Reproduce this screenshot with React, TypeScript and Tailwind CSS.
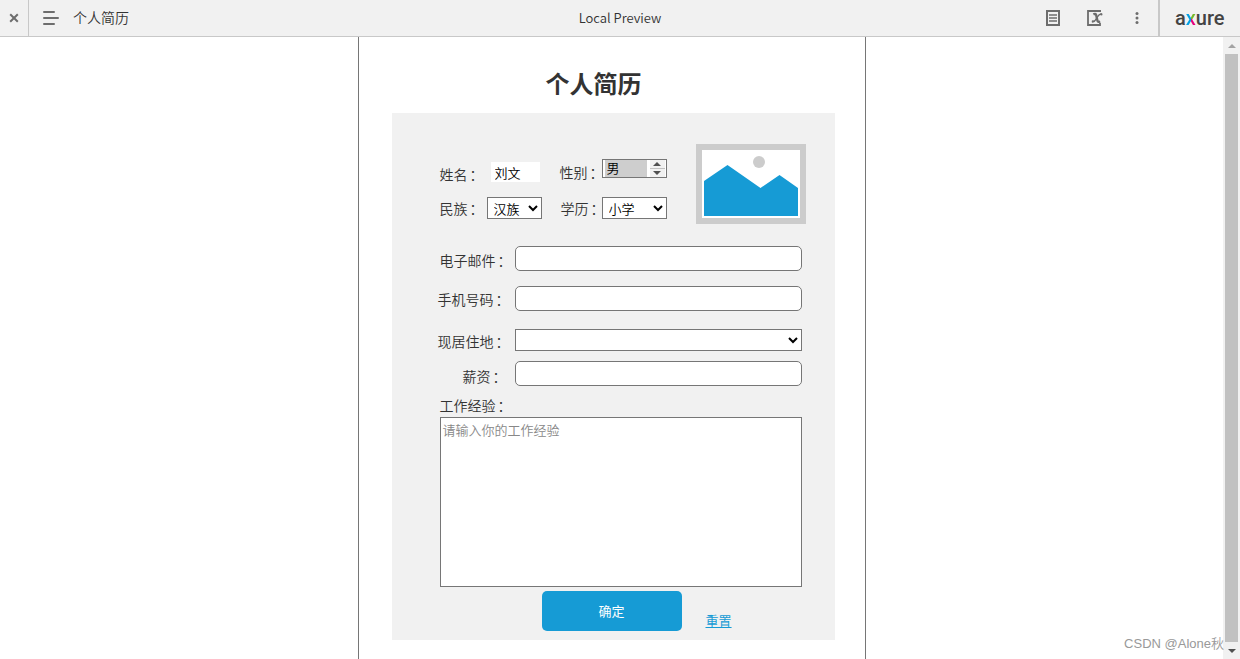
import React, { useState } from "react";

const inputClass =
  "h-[25px] w-full rounded-[5px] border border-[#767676] bg-white px-2 text-[13px] outline-none";

const selectClass =
  "h-[22px] border border-[#767676] bg-white pl-0.5 text-[13px] text-black outline-none";

const Label = ({
  htmlFor,
  className = "",
  children,
}: {
  htmlFor: string;
  className?: string;
  children: React.ReactNode;
}) => (
  <label
    htmlFor={htmlFor}
    className={`shrink-0 whitespace-nowrap text-[14px] leading-5 text-[#333] ${className}`}
  >
    {children}
    <span className="pl-0.5">：</span>
  </label>
);

const Header = () => (
  <header className="flex h-[37px] shrink-0 items-center justify-between border-b border-[#c8c8c8] bg-[#f1f1f1]">
    {/* LEFT */}
    <div className="flex h-full flex-1 items-center">
      <button
        type="button"
        aria-label="Close"
        className="flex h-full w-[29px] items-center justify-center border-r border-[#c8c8c8]"
      >
        <svg width="10" height="10" viewBox="0 0 10 10" stroke="#6d6d6d" strokeWidth="2">
          <path d="M1.2 1.2 8.8 8.8M8.8 1.2 1.2 8.8" />
        </svg>
      </button>
      <button type="button" aria-label="Pages" className="ml-3.5">
        <svg
          width="16"
          height="14"
          viewBox="0 0 16 14"
          stroke="#6d6d6d"
          strokeWidth="2"
          strokeLinecap="round"
        >
          <path d="M1 1H11M1 7H15M1 13H11" />
        </svg>
      </button>
      <span className="ml-3.5 pb-0.5 text-[14px] leading-5">个人简历</span>
    </div>

    <span className="text-[13px] leading-5">Local Preview</span>

    {/* RIGHT */}
    <div className="flex h-full flex-1 items-center justify-end">
      <button type="button" aria-label="Notes">
        <svg width="14" height="16" viewBox="0 0 14 16" fill="none" stroke="#6d6d6d">
          <rect x="1" y="1" width="12" height="14" strokeWidth="2" />
          <path d="M3 5H11M3 8H11M3 11H11" strokeWidth="1.6" />
        </svg>
      </button>
      <button type="button" aria-label="Variables" className="ml-[27px]">
        <svg width="16" height="16" viewBox="0 0 16 16" fill="none" stroke="#6d6d6d">
          <path d="M14 1H1V15H13V13" strokeWidth="1.8" />
          <path
            d="M6.4 4.4C8.4 3.2 9 4 9.4 6L10.2 9.8C10.6 12 11.4 12.4 13 11.2"
            strokeWidth="2.4"
          />
          <path d="M14.8 4.2C12.2 3 11 6 9.8 8C8.4 10.4 7.4 12.6 5 11.6" strokeWidth="1.3" />
          <circle cx="14.4" cy="4.4" r="1.1" fill="#6d6d6d" stroke="none" />
          <circle cx="5.8" cy="11.3" r="1.1" fill="#6d6d6d" stroke="none" />
        </svg>
      </button>
      <button type="button" aria-label="More" className="ml-8">
        <svg width="4" height="14" viewBox="0 0 4 14" fill="#6d6d6d">
          <circle cx="2" cy="2.5" r="1.5" />
          <circle cx="2" cy="7" r="1.5" />
          <circle cx="2" cy="11.5" r="1.5" />
        </svg>
      </button>
      <a
        href="#axure"
        className="ml-[19px] flex h-full w-[82px] items-center border-l-2 border-[#c8c8c8] pl-[15px] font-['Roboto',sans-serif] text-[20px] font-medium leading-6 text-[#444]"
      >
        a
        <span className="bg-[conic-gradient(from_0deg_at_50%_56%,#76b82a_0_90deg,#e5007d_90deg_180deg,#009fe3_180deg)] bg-clip-text text-transparent">
          x
        </span>
        ure
      </a>
    </div>
  </header>
);

const Photo = () => (
  <svg width="110" height="80" viewBox="0 0 110 80" className="shrink-0">
    <rect width="110" height="80" fill="#ccc" />
    <rect x="6" y="6" width="98" height="68" fill="#fff" />
    <circle cx="63" cy="18" r="6" fill="#ccc" />
    <path d="M8 37 31.5 21 64.5 44 83.5 31 102 44V72H8Z" fill="#169bd5" />
  </svg>
);

const ScrollBar = () => (
  <div className="flex w-[17px] shrink-0 flex-col items-center bg-[#f1f1f1]">
    <div className="flex h-[17px] items-center">
      <svg width="8" height="4" viewBox="0 0 8 4" fill="#a3a3a3">
        <path d="M4 0 8 4H0Z" />
      </svg>
    </div>
    <div className="w-[13px] flex-1 bg-[#c1c1c1]" />
    <div className="flex h-[17px] items-center">
      <svg width="8" height="4" viewBox="0 0 8 4" fill="#505050">
        <path d="M0 0H8L4 4Z" />
      </svg>
    </div>
  </div>
);

const ResumeForm = () => {
  const [name, setName] = useState("刘文");
  const [email, setEmail] = useState("");
  const [phone, setPhone] = useState("");
  const [salary, setSalary] = useState("");
  const [work, setWork] = useState("");

  return (
    <form
      onSubmit={(e) => e.preventDefault()}
      className="mr-[30px] ml-[33px] bg-[#f1f1f1] pt-[31px] pr-[33px] pb-[9px] pl-[46px]"
    >
      {/* BASIC INFO */}
      <div className="-mr-1 flex justify-between">
        <div className="pt-[15px] pl-0.5">
          <div className="flex h-[23px] items-start">
            <Label htmlFor="name" className="w-[51px] pt-[5px]">
              姓名
            </Label>
            <input
              id="name"
              value={name}
              onChange={(e) => setName(e.target.value)}
              className="mt-[3px] h-5 w-[49px] bg-white px-1 text-[13px] text-black outline-none"
            />
            <Label htmlFor="gender" className="ml-5 w-[42px] pt-[3px]">
              性别
            </Label>
            <div className="flex h-[19px] w-[65px] justify-between border border-[#767676] bg-white pr-px pl-0.5">
              <select
                id="gender"
                className="w-[42px] appearance-none bg-[#cecece] pb-0.5 pl-0.5 text-[13px] leading-4 text-black outline-none"
              >
                <option>男</option>
                <option>女</option>
              </select>
              <div className="flex w-[15px] flex-col divide-y divide-[#c1c1c1] bg-[#f1f1f1]">
                <button
                  type="button"
                  aria-label="上一项"
                  className="flex flex-1 items-center justify-center"
                >
                  <svg width="8" height="4" viewBox="0 0 8 4" fill="#505050">
                    <path d="M4 0 8 4H0Z" />
                  </svg>
                </button>
                <button
                  type="button"
                  aria-label="下一项"
                  className="flex flex-1 items-center justify-center"
                >
                  <svg width="8" height="4" viewBox="0 0 8 4" fill="#505050">
                    <path d="M0 0H8L4 4Z" />
                  </svg>
                </button>
              </div>
            </div>
          </div>
          <div className="mt-[15px] flex h-[22px] items-center">
            <Label htmlFor="nation" className="w-[47px]">
              民族
            </Label>
            <select id="nation" className={`w-[55px] ${selectClass}`}>
              <option>汉族</option>
              <option>其他</option>
            </select>
            <Label htmlFor="degree" className="ml-[19px] w-[41px]">
              学历
            </Label>
            <select id="degree" className={`w-[65px] ${selectClass}`}>
              <option>小学</option>
              <option>中学</option>
              <option>大学</option>
            </select>
          </div>
        </div>
        <Photo />
      </div>

      {/* CONTACT */}
      <div className="mt-[22px] flex items-center">
        <Label htmlFor="email" className="w-[77px] pt-0.5 pl-0.5">
          电子邮件
        </Label>
        <input
          id="email"
          value={email}
          onChange={(e) => setEmail(e.target.value)}
          className={inputClass}
        />
      </div>
      <div className="mt-[15px] flex items-center">
        <Label htmlFor="phone" className="w-[77px]">
          手机号码
        </Label>
        <input
          id="phone"
          value={phone}
          onChange={(e) => setPhone(e.target.value)}
          className={inputClass}
        />
      </div>
      <div className="mt-[18px] flex h-[22px] items-center">
        <Label htmlFor="city" className="w-[77px] pt-0.5">
          现居住地
        </Label>
        <select id="city" className={`w-full ${selectClass}`}>
          <option></option>
        </select>
      </div>
      <div className="mt-2.5 flex items-center">
        <Label htmlFor="salary" className="w-[77px] pt-1 pl-[25px]">
          薪资
        </Label>
        <input
          id="salary"
          value={salary}
          onChange={(e) => setSalary(e.target.value)}
          className={inputClass}
        />
      </div>

      {/* WORK */}
      <div className="mt-[9px] flex flex-col pl-0.5">
        <Label htmlFor="work">工作经验</Label>
        <textarea
          id="work"
          value={work}
          onChange={(e) => setWork(e.target.value)}
          placeholder="请输入你的工作经验"
          className="mt-0.5 h-[170px] resize-none border border-[#767676] bg-white p-0.5 text-[13px] leading-5 outline-none placeholder:text-[#888]"
        />
      </div>

      {/* ACTIONS */}
      <div className="mt-1 flex items-end pl-[104px]">
        <button
          type="submit"
          className="h-10 w-[140px] rounded-[5px] bg-[#169bd5] text-[13px] font-normal text-white"
        >
          确定
        </button>
        <a
          href="#reset"
          className="ml-6 text-[13px] leading-5 font-normal text-[#169bd5] underline"
        >
          重置
        </a>
      </div>
    </form>
  );
};

const App = () => {
  return (
    <div className="relative flex h-screen flex-col overflow-hidden bg-white font-['Noto_Sans_CJK_SC',sans-serif] font-[350] text-[#333]">
      <Header />
      <div className="flex min-h-0 flex-1">
        <main className="flex min-w-0 flex-1 justify-center">
          <div className="w-full max-w-[508px] border-x border-[#767676]">
            <h1 className="pt-7 pr-9 pb-3 text-center text-[24px] leading-9 font-bold">
              个人简历
            </h1>
            <ResumeForm />
          </div>
        </main>
        <ScrollBar />
      </div>
      <span className="absolute right-4 bottom-[5px] font-['Liberation_Sans','Noto_Sans_CJK_SC',sans-serif] text-[13px] leading-5 text-[#999]">
        CSDN @Alone秋
      </span>
    </div>
  );
};

export default App;
